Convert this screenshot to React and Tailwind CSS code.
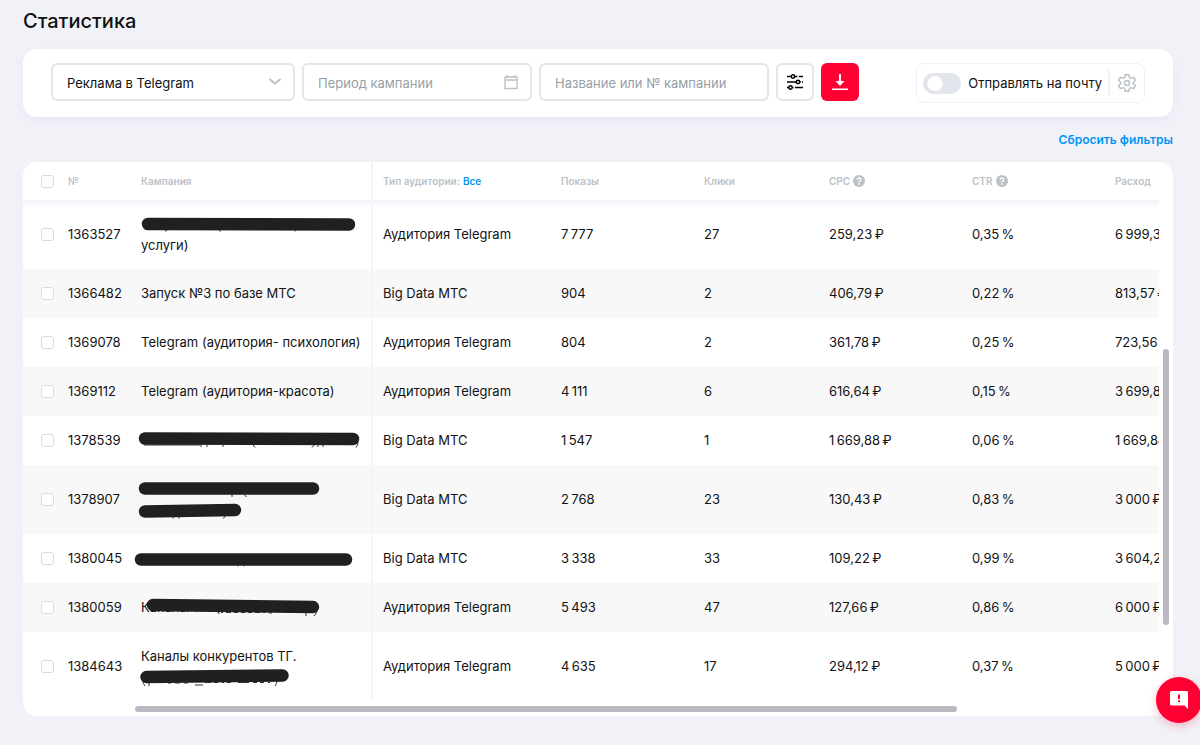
import React from 'react'

const columns = [
  { key: 'type', label: 'Тип аудитории:', link: 'Все' },
  { key: 'views', label: 'Показы' },
  { key: 'clicks', label: 'Клики' },
  { key: 'cpc', label: 'CPC', hint: true },
  { key: 'ctr', label: 'CTR', hint: true },
  { key: 'spent', label: 'Расход' },
]

const TG = 'Аудитория Telegram'
const BD = 'Big Data МТС'

// A string is a line of text, an object is a line hidden with a marker.
// line: marker stroke, marks: bits of letters left visible around it
const rows = [
  {
    id: '1363527',
    name: [
      { line: 'M7 10L208 10.5', marks: 'M26 16l-2 1.500M78 16l2 1.500M155 16l-1 1.500' },
      'услуги)',
    ],
    type: TG, views: '7 777', clicks: '27', cpc: '259,23 ₽', ctr: '0,35 %', spent: '6 999,34 ₽',
  },
  { id: '1366482', name: ['Запуск №3 по базе МТС'], type: BD, views: '904', clicks: '2', cpc: '406,79 ₽', ctr: '0,22 %', spent: '813,57 ₽' },
  { id: '1369078', name: ['Telegram (аудитория- психология)'], type: TG, views: '804', clicks: '2', cpc: '361,78 ₽', ctr: '0,25 %', spent: '723,56 ₽' },
  { id: '1369112', name: ['Telegram (аудитория-красота)'], type: TG, views: '4 111', clicks: '6', cpc: '616,64 ₽', ctr: '0,15 %', spent: '3 699,84 ₽' },
  {
    id: '1378539',
    name: [
      { line: 'M4 8.500L212 9', marks: 'M3 15h56M60 15v2M66 15v2M82 15v2M112 15l2 2.500M173 15l-2 2.500M177 15v2M182 15v2M217 12q0 3-2 5.500' },
    ],
    type: BD, views: '1 547', clicks: '1', cpc: '1 669,88 ₽', ctr: '0,06 %', spent: '1 669,88 ₽',
  },
  {
    id: '1378907',
    name: [
      { line: 'M4 9.500L172 9.500', marks: 'M91 15.500v2.500M103 15l2.500 3' },
      { line: 'M4 11.500L94 10', marks: 'M33 17l-1.500 1.500M38 17v1.500M84 16l-1.500 2.500' },
    ],
    type: BD, views: '2 768', clicks: '23', cpc: '130,43 ₽', ctr: '0,83 %', spent: '3 000 ₽',
  },
  {
    id: '1380045',
    name: [{ line: 'M0 11.500L205 11.500', marks: 'M97 17.500v1M103 17.500v1' }],
    type: BD, views: '3 338', clicks: '33', cpc: '109,22 ₽', ctr: '0,99 %', spent: '3 604,26 ₽',
  },
  {
    id: '1380059',
    name: [{ text: 'Каналы ТГ. (', line: 'M12 8L172 10', marks: 'M80 15.500h2M85 15.500h5M93 15.500h4M100 15.500h4M107 15.500h4M114 15.500h5M122 15.500h2M128 16h3M165 15v4M176 14q-1 3-3 5' }],
    type: TG, views: '5 493', clicks: '47', cpc: '127,66 ₽', ctr: '0,86 %', spent: '6 000 ₽',
  },
  {
    id: '1384643',
    name: [
      'Каналы конкурентов ТГ.',
      { line: 'M5.500 10L141.500 8.500', marks: 'M2 14q0 3 2 5M8 15v4M27 16h3M34 16h5M43 16h4M54 18h8M64 15.500h6M73 15.500h4M81 15.500h2M86 15.500h4M97 15.500h11M112 15.500h4M119 15.500h4M127 15.500h2M136 13q0 4-2 6' },
    ],
    type: TG, views: '4 635', clicks: '17', cpc: '294,12 ₽', ctr: '0,37 %', spent: '5 000 ₽',
  },
]

// thin space between thousands and before the unit
const thin = (value) => value.replace(/ (?=[\d₽%])/g, '\u2009')

function Checkbox({ label }) {
  return (
    <input
      type="checkbox"
      aria-label={label}
      className="block h-[13px] w-[13px] appearance-none rounded-[3px] border border-[#d8dbe5] bg-white checked:bg-[#0095f6]"
    />
  )
}

function NameLine({ value }) {
  if (typeof value === 'string') {
    return <div className="whitespace-nowrap">{value}</div>
  }
  return (
    <div className="relative h-[21px] whitespace-nowrap">
      {value.text}
      <svg className="absolute inset-0 h-full w-full overflow-visible" fill="none" aria-hidden="true">
        <path d={value.marks} stroke="#333" strokeWidth="1" />
        <path d={value.line} stroke="#202020" strokeWidth="12.500" strokeLinecap="round" />
      </svg>
    </div>
  )
}

function HintIcon() {
  return (
    <svg viewBox="0 0 12 12" className="h-3 w-3" aria-hidden="true">
      <circle cx="6" cy="6" r="6" fill="#bbc1c7" />
      <path d="M4.200 4.700a1.800 1.700 0 1 1 2.700 1.450c-.6.350-.9.600-.9 1.150" fill="none" stroke="#fff" strokeWidth="1.300" />
      <circle cx="6" cy="8.900" r=".85" fill="#fff" />
    </svg>
  )
}

function SlidersIcon() {
  return (
    <svg viewBox="0 0 18 18" className="h-[18px] w-[18px]" fill="none" stroke="#000" strokeWidth="1.500" aria-hidden="true">
      <path d="M1 3.500h4M9 3.500h2.500M13 3.500h4M1 9h9M14 9h.8M16 9h1M1 14.500h1.500M6.500 14.500h1M9 14.500h8" />
      <circle cx="7" cy="3.500" r="1.700" />
      <circle cx="12" cy="9" r="1.700" />
      <circle cx="4.500" cy="14.500" r="1.700" />
    </svg>
  )
}

function GearIcon() {
  return (
    <svg viewBox="0 0 24 24" className="h-5 w-5" fill="none" stroke="#bbc1c7" strokeWidth="1.800" strokeLinejoin="round" aria-hidden="true">
      <path d="M9.800 2h4.400l.6 3.300 1.900 1.100 3.200-1.200 2.200 3.800-2.600 2.100v1.800l2.600 2.100-2.200 3.800-3.200-1.200-1.900 1.100-.6 3.300H9.800l-.6-3.300-1.900-1.100-3.200 1.200L1.900 15l2.600-2.100v-1.800L1.900 9l2.200-3.800 3.200 1.200 1.900-1.100z" />
      <circle cx="12" cy="12" r="3" />
    </svg>
  )
}

function Filters() {
  const field = 'h-[38px] w-full rounded-md border-2 border-[#e2e5ec] bg-white px-3.5 text-[13px] outline-none placeholder:text-[#969fa8]'
  return (
    <form className="flex items-start gap-[7px] rounded-[14px] bg-white px-7 py-3.5 shadow-[0_4px_12px_rgba(120,120,255,0.08)]">
      <div className="relative w-[244px]">
        <select aria-label="Тип рекламы" className={field + ' appearance-none pt-1'}>
          <option>Реклама в Telegram</option>
        </select>
        <svg viewBox="0 0 12 8" className="pointer-events-none absolute top-[15px] right-3.5 h-2 w-3" fill="none" aria-hidden="true">
          <path d="M1 1.500l5 4 5-4" stroke="#bbc1c7" strokeWidth="2" strokeLinecap="round" />
        </svg>
      </div>
      <div className="relative w-[230px]">
        <input aria-label="Период кампании" placeholder="Период кампании" className={field + ' pt-0.5'} />
        <svg viewBox="0 0 14 15" className="pointer-events-none absolute top-3 right-3.5 h-[15px] w-3.5" fill="none" stroke="#bbc1c7" aria-hidden="true">
          <path d="M1 2h12v11.500H1zM1 5h12M3.500 0v2M10.500 0v2" strokeWidth="1.300" />
        </svg>
      </div>
      <div className="w-[230px]">
        <input aria-label="Название или № кампании" placeholder="Название или № кампании" className={field + ' pt-0.5'} />
      </div>
      <button
        type="button"
        aria-label="Настройка фильтров"
        className="flex h-[38px] w-[38px] items-center justify-center rounded-md border-2 border-[#e2e5ec]"
      >
        <SlidersIcon />
      </button>
      <button
        type="button"
        aria-label="Скачать"
        className="flex h-[38px] w-[38px] items-center justify-center rounded-md bg-[#ff0032]"
      >
        <svg viewBox="0 0 16 16" className="h-4 w-4" fill="#fff" aria-hidden="true">
          <path d="M7 0h2v7h3.500L8 12 3.500 7H7zM0 14.500h16V16H0z" />
        </svg>
      </button>
      <div className="ml-auto flex h-10 items-center rounded-lg border border-[#f0f1f5] pl-1.5">
        <label className="flex items-center gap-[7px] text-[13px]">
          <input
            type="checkbox"
            role="switch"
            className="h-[21px] w-[38px] appearance-none rounded-full bg-[#e2e5eb] bg-[radial-gradient(circle_at_12px_50%,#fff_7px,transparent_8px)]"
          />
          <span className="pt-0.5">Отправлять на почту</span>
        </label>
        <button type="button" aria-label="Настройки отправки" className="ml-1.5 flex h-[26px] items-center border-l-2 border-[#f0f1f5] px-[7px]">
          <GearIcon />
        </button>
      </div>
    </form>
  )
}

function StatsTable() {
  return (
    <div className="mt-3.5 overflow-hidden rounded-[14px] bg-white">
      <div className="flex">
        <div className="min-w-0 flex-1 overflow-hidden">
          <table className="w-[1240px] table-fixed border-collapse text-left text-[13px] leading-[21px]">
            <colgroup>
              <col className="w-[35px]" />
              <col className="w-[73px]" />
              <col className="w-[241px]" />
              <col className="w-[179px]" />
              <col className="w-[143px]" />
              <col className="w-[125px]" />
              <col className="w-[143px]" />
              <col className="w-[143px]" />
              <col />
            </colgroup>
            <thead>
              <tr className="h-[38px] text-[10px] text-[#bbc1c7] shadow-[0_2px_6px_rgba(100,110,180,0.12)]">
                <th className="pl-[18px]"><Checkbox label="Выбрать все" /></th>
                <th className="px-2.5 font-semibold">№</th>
                <th className="border-r-2 border-[#f4f5fc] px-2.5 font-semibold">Кампания</th>
                {columns.map((c) => (
                  <th key={c.key} className="px-2.5 font-semibold">
                    <div className="flex items-center gap-[3px]">
                      {c.label}
                      {c.link && <a href="#type" className="text-[#0095f6]">{c.link}</a>}
                      {c.hint && <HintIcon />}
                    </div>
                  </th>
                ))}
              </tr>
            </thead>
            <tbody>
              {rows.map((row) => (
                <tr key={row.id} className={(row.name.length > 1 ? 'h-[69px]' : 'h-[49px]') + ' even:bg-[#f8f8f8]'}>
                  <td className="pl-[18px]"><Checkbox label={'Выбрать ' + row.id} /></td>
                  <td className="px-2.5">{row.id}</td>
                  <td className="border-r-2 border-[#f4f5fc] px-2.5">
                    {row.name.map((n, i) => <NameLine key={i} value={n} />)}
                  </td>
                  {columns.map((c) => (
                    <td key={c.key} className="px-2.5 whitespace-nowrap">{thin(row[c.key])}</td>
                  ))}
                </tr>
              ))}
            </tbody>
          </table>
        </div>
        <div className="w-3.5 pt-[187px] pl-1">
          <div className="h-[276px] w-1.5 rounded-full bg-[#bab9c1]" />
        </div>
      </div>
      <div className="h-[15px] pt-[5px] pr-[216px] pl-28">
        <div className="h-1.5 rounded-full bg-[#bab9c1]" />
      </div>
    </div>
  )
}

export default function App() {
  return (
    <div className="min-h-screen bg-[#f1f2f7] pt-2 pr-[27px] pb-7 pl-[23px] font-['Inter','Liberation_Sans',sans-serif] text-[#111214]">
      <h1 className="mb-3.5 text-[20px] leading-[27px] font-medium">Статистика</h1>
      <Filters />
      <div className="mt-3.5 flex justify-end text-xs leading-[17px] font-semibold">
        <a href="#reset" className="text-[#0095f6]">Сбросить фильтры</a>
      </div>
      <StatsTable />
      <button
        type="button"
        aria-label="Обратная связь"
        className="fixed right-[-2px] bottom-[22px] flex h-[46px] w-[46px] items-center justify-center rounded-full bg-[#ff0032] shadow-[0_3px_10px_rgba(255,0,50,0.25)]"
      >
        <svg viewBox="0 0 18 18" className="h-[18px] w-[18px]" aria-hidden="true">
          <path d="M1.500 0h15A1.500 1.500 0 0 1 18 1.500V18l-3.500-3.500h-13A1.500 1.500 0 0 1 0 13V1.500A1.500 1.500 0 0 1 1.500 0z" fill="#fff" />
          <path d="M8 3.500h2v4.500H8zM8 9.300h2v2H8z" fill="#ff0032" />
        </svg>
      </button>
    </div>
  )
}
